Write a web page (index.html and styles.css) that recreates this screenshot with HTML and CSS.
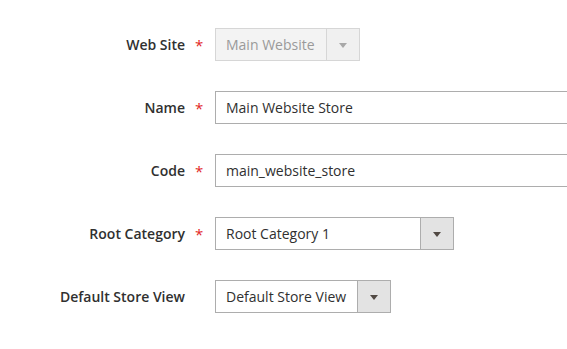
FILE: index.html
```html
<!DOCTYPE html>
<html lang="en">
<head>
    <meta charset="UTF-8">
    <title>Store Information</title>
    <link rel="stylesheet" href="styles.css">
</head>
<body>
    <form class="store-form">
        <div class="field">
            <label class="field-label">Web Site</label>
            <span class="req">*</span>
            <div class="select disabled" style="width: 145px;">
                <span class="select-value">Main Website</span>
                <span class="select-arrow"><i></i></span>
            </div>
        </div>
        <div class="field">
            <label class="field-label">Name</label>
            <span class="req">*</span>
            <input class="text-input" type="text" value="Main Website Store">
        </div>
        <div class="field">
            <label class="field-label">Code</label>
            <span class="req">*</span>
            <input class="text-input" type="text" value="main_website_store">
        </div>
        <div class="field">
            <label class="field-label">Root Category</label>
            <span class="req">*</span>
            <div class="select" style="width: 239px;">
                <span class="select-value">Root Category 1</span>
                <span class="select-arrow"><i></i></span>
            </div>
        </div>
        <div class="field">
            <label class="field-label">Default Store View</label>
            <span class="req"></span>
            <div class="select" style="width: 176px;">
                <span class="select-value">Default Store View</span>
                <span class="select-arrow"><i></i></span>
            </div>
        </div>
    </form>
</body>
</html>
```

FILE: styles.css
```css
body {
    margin: 0;
    font-family: "Open Sans", sans-serif;
    font-size: 14px;
    color: #303030;
    background-color: #ffffff;
    overflow: hidden;
}

.store-form {
    padding-top: 28px;
}

.field {
    display: flex;
    align-items: center;
    margin-bottom: 30px;
}

.field-label {
    flex-shrink: 0;
    width: 185px;
    text-align: right;
    font-weight: 600;
    color: #303030;
}

.req {
    flex-shrink: 0;
    width: 30px;
    box-sizing: border-box;
    padding-left: 10px;
    color: #e22626;
    font-size: 15px;
}

.text-input {
    flex-shrink: 0;
    width: 360px;
    height: 33px;
    box-sizing: border-box;
    border: 1px solid #adadad;
    padding: 0 10px;
    font-family: "Open Sans", sans-serif;
    font-size: 14px;
    color: #303030;
    outline: none;
}

.select {
    flex-shrink: 0;
    display: flex;
    height: 33px;
    box-sizing: border-box;
    border: 1px solid #adadad;
    background-color: #ffffff;
}

.select-value {
    flex: 1;
    display: flex;
    align-items: center;
    padding-left: 10px;
    white-space: nowrap;
}

.select-arrow {
    width: 32px;
    display: flex;
    align-items: center;
    justify-content: center;
    background-color: #e3e3e3;
    border-left: 1px solid #adadad;
}

.select-arrow i {
    width: 0;
    height: 0;
    border-left: 4px solid transparent;
    border-right: 4px solid transparent;
    border-top: 5px solid #514943;
    margin-top: 1px;
}

.select.disabled {
    background-color: #f3f3f3;
    border-color: #d6d6d6;
    color: #9a9a9a;
}

.select.disabled .select-arrow {
    background-color: #f0f0f0;
    border-left-color: #d6d6d6;
}

.select.disabled .select-arrow i {
    border-top-color: #a8a8a8;
}
```
